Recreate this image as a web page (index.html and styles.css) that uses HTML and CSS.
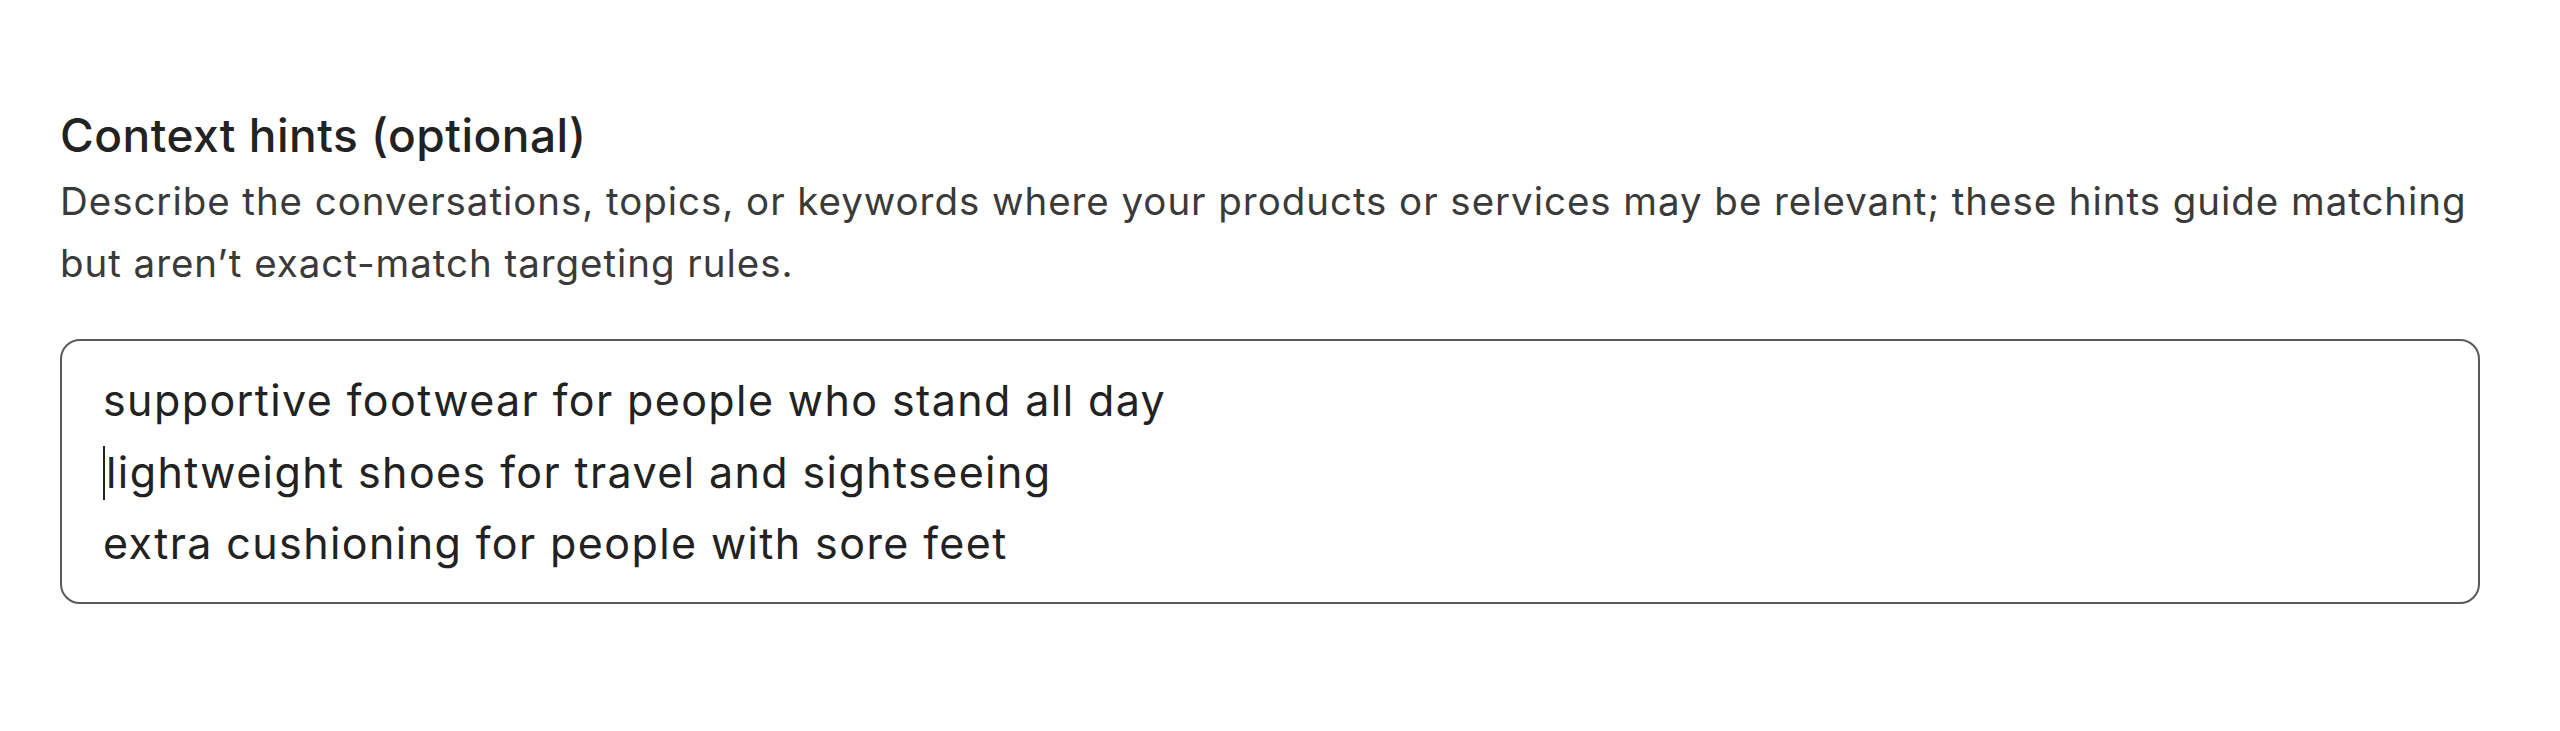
FILE: index.html
```html
<!DOCTYPE html>
<html lang="en">
<head>
<meta charset="utf-8">
<title>Context hints</title>
<link rel="stylesheet" href="styles.css">
</head>
<body>
  <section class="field">
    <h2 class="field-label">Context hints (optional)</h2>
    <p class="field-help">Describe the conversations, topics, or keywords where your products or services may be relevant; these hints guide matching but aren’t exact-match targeting rules.</p>
    <div class="hints-box" role="textbox" aria-multiline="true">
      <div class="hint-line">supportive footwear for people who stand all day</div>
      <div class="hint-line"><span class="caret"></span>lightweight shoes for travel and sightseeing</div>
      <div class="hint-line">extra cushioning for people with sore feet</div>
    </div>
  </section>
</body>
</html>
```

FILE: styles.css
```css
html, body {
  margin: 0;
  padding: 0;
  background: #ffffff;
}

body {
  font-family: Inter, "Noto Sans", "Liberation Sans", sans-serif;
  color: #222222;
}

.field {
  padding: 108px 80px 0 60px;
  display: flex;
  flex-direction: column;
}

.field-label {
  margin: 0;
  font-size: 46px;
  line-height: 54px;
  font-weight: 500;
  letter-spacing: 0.5px;
  color: #222222;
}

.field-help {
  margin: 8px 0 0 0;
  font-size: 38.5px;
  line-height: 62px;
  font-weight: 400;
  letter-spacing: 0.95px;
  color: #3a3a3a;
  max-width: 2420px;
}

.hints-box {
  margin-top: 45px;
  width: 2420px;
  box-sizing: border-box;
  border: 2px solid #5a5a5a;
  border-radius: 20px;
  padding: 24px 41px 22px 41px;
  font-size: 43px;
  line-height: 71.5px;
  letter-spacing: 1.4px;
  color: #222222;
}

.hint-line {
  white-space: nowrap;
}

.caret {
  display: inline-block;
  width: 0;
  height: 54px;
  border-left: 2px solid #222222;
  margin-right: 1px;
  vertical-align: -12px;
}
```
